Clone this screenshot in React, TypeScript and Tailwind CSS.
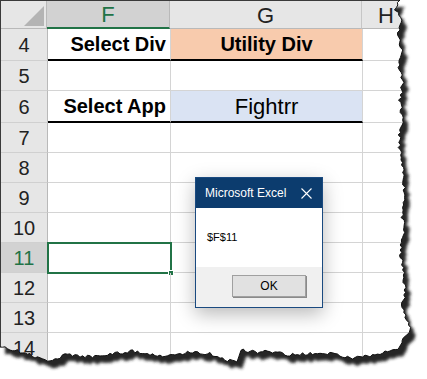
import React from "react";

const GREEN = "#217346";

function rng(seed: number) {
  let s = seed;
  return () => {
    s = (s * 16807) % 2147483647;
    return (s - 1) / 2147483646;
  };
}

// right edge: [y, x]
const rightBase: [number, number][] = [
  [0, 400], [10, 396], [20, 402], [35, 398], [50, 402], [65, 399], [80, 403],
  [100, 400], [120, 402], [140, 399], [160, 401], [180, 404], [200, 405],
  [215, 402], [230, 404], [250, 400], [270, 403], [290, 405], [305, 403],
  [320, 406], [330, 411], [338, 404], [345, 401],
];
// bottom edge: [x, y], right to left
const bottomBase: [number, number][] = [
  [398, 349], [390, 351], [370, 356], [350, 358], [330, 353], [310, 354],
  [290, 355], [270, 351], [255, 352], [241, 350], [237, 361], [225, 360],
  [210, 354], [190, 352], [170, 356], [150, 354], [130, 351], [110, 355],
  [90, 357], [65, 354], [55, 360], [45, 361], [30, 355], [15, 350], [0, 347],
];

function buildEdge(): [number, number][] {
  const r = rng(11);
  const pts: [number, number][] = [];
  for (let i = 0; i < rightBase.length - 1; i++) {
    const [y0, x0] = rightBase[i];
    const [y1, x1] = rightBase[i + 1];
    const steps = Math.max(1, Math.round((y1 - y0) / 2.5));
    for (let k = 0; k < steps; k++) {
      const t = k / steps;
      const y = y0 + (y1 - y0) * t;
      const x = x0 + (x1 - x0) * t + (i === 0 && k === 0 ? 0 : (r() - 0.5) * 3.2);
      pts.push([x, y]);
    }
  }
  for (let i = 0; i < bottomBase.length - 1; i++) {
    const [x0, y0] = bottomBase[i];
    const [x1, y1] = bottomBase[i + 1];
    const steps = Math.max(1, Math.round((x0 - x1) / 2.5));
    for (let k = 0; k < steps; k++) {
      const t = k / steps;
      const x = x0 + (x1 - x0) * t;
      const y = y0 + (y1 - y0) * t + (r() - 0.5) * 3.2;
      pts.push([x, y]);
    }
  }
  pts.push([0, 347]);
  return pts;
}

const edge = buildEdge();
const edgeLine = edge.map((p, i) => `${i ? "L" : "M"}${p[0].toFixed(1)} ${p[1].toFixed(1)}`).join(" ");
const sheetPath = `M0 0 ${edgeLine.replace(/^M/, "L")} Z`;
const outsidePath = `M-20 -20 H447 V399 H-20 Z ${sheetPath}`;

function TornEdge() {
  return (
    <svg
      className="absolute inset-0 pointer-events-none"
      width={427}
      height={379}
      viewBox="0 0 427 379"
    >
      <defs>
        <filter id="blur" x="-10%" y="-10%" width="120%" height="120%">
          <feGaussianBlur stdDeviation="1.8" />
        </filter>
        <clipPath id="outside">
          <path d={outsidePath} clipRule="evenodd" />
        </clipPath>
      </defs>
      <path d={outsidePath} fill="#ffffff" fillRule="evenodd" />
      <g clipPath="url(#outside)">
        <path d={sheetPath} transform="translate(5,7)" fill="#262626" filter="url(#blur)" />
      </g>
      <path d={edgeLine} fill="none" stroke="#111" strokeWidth={1} />
    </svg>
  );
}

type Row = {
  n: number;
  tall?: boolean;
  f?: string;
  g?: string;
  gKind?: "orange" | "blue";
  selected?: boolean;
};

const rows: Row[] = [
  { n: 4, tall: true, f: "Select Div", g: "Utility Div", gKind: "orange" },
  { n: 5 },
  { n: 6, tall: true, f: "Select App", g: "Fightrr", gKind: "blue" },
  { n: 7 },
  { n: 8 },
  { n: 9 },
  { n: 10 },
  { n: 11, selected: true },
  { n: 12 },
  { n: 13 },
  { n: 14 },
];

function SheetRow({ row }: { row: Row }) {
  const black = !!row.tall;
  return (
    <div className={`flex shrink-0 ${row.tall ? "h-[32px]" : "h-[30px]"}`}>
      <div
        className={`w-[47px] shrink-0 flex items-center justify-center border-r border-b border-r-[#b9b9b9] border-b-[#d0d0d0] text-[20px] ${
          row.selected ? "bg-[#d2d2d2] text-[#217346]" : "bg-[#e6e6e6] text-[#222]"
        }`}
      >
        {row.n}
      </div>
      <div
        className={`relative w-[123px] shrink-0 flex items-center justify-end pr-[4px] border-r border-r-[#d4d4d4] font-bold text-[20px] text-black ${
          black ? "border-b-2 border-b-black" : "border-b border-b-[#d4d4d4]"
        }`}
      >
        {row.f}
        {row.selected && (
          <div className="absolute -left-[1px] -top-[1px] w-[125px] h-[32px] border-2 border-[#217346]">
            <div className="absolute -right-[4px] -bottom-[4px] w-[6px] h-[6px] bg-[#217346] border border-white" />
          </div>
        )}
      </div>
      <div
        className={`w-[192px] shrink-0 flex items-center justify-center border-r border-r-[#d4d4d4] text-black ${
          black ? "border-b-2 border-b-black" : "border-b border-b-[#d4d4d4]"
        } ${row.gKind === "orange" ? "bg-[#f8cbad] font-bold text-[20px]" : ""} ${
          row.gKind === "blue" ? "bg-[#dae3f3] text-[22px]" : ""
        }`}
      >
        {row.g}
      </div>
      <div className="flex-1 border-b border-b-[#d4d4d4]" />
    </div>
  );
}

export default function App() {
  return (
    <div className="relative w-[427px] h-[379px] overflow-hidden bg-white font-['Liberation_Sans',Arial,sans-serif]">
      <div className="w-[427px] h-[379px] border-t border-l border-[#3a3a3a] flex flex-col">
        <div className="flex h-[28px] shrink-0">
          <div className="relative w-[46px] shrink-0 bg-[#e6e6e6] border-r border-b border-[#b9b9b9]">
            <svg className="absolute left-0 top-0" width="46" height="27" viewBox="0 0 46 27">
              <path d="M23 25 L43 25 L43 5 Z" fill="#b4b4b4" />
            </svg>
          </div>
          <div
            className="w-[123px] shrink-0 flex items-center justify-center bg-[#d2d2d2] border-r border-r-[#b9b9b9] border-b-2 text-[22px] pt-[1px]"
            style={{ borderBottomColor: GREEN, color: GREEN }}
          >
            F
          </div>
          <div className="w-[192px] shrink-0 flex items-center justify-center bg-[#e6e6e6] border-r border-b border-[#c6c6c6] border-b-[#b9b9b9] text-[22px] text-[#222] pt-[1px]">
            G
          </div>
          <div className="w-[48px] shrink-0 flex items-center justify-center bg-[#e6e6e6] border-b border-[#b9b9b9] text-[22px] text-[#222] pt-[1px]">
            H
          </div>
          <div className="flex-1 bg-[#e6e6e6] border-b border-[#b9b9b9]" />
        </div>
        {rows.map((r) => (
          <SheetRow key={r.n} row={r} />
        ))}
      </div>

      <div className="absolute left-[195px] top-[177px] w-[128px] h-[131px] flex flex-col border border-[#1a4a80] bg-white shadow-[0_6px_18px_rgba(0,0,0,0.28)]">
        <div className="h-[30px] shrink-0 bg-[#0c3c6e] flex items-center justify-between pl-[9px] pr-[10px] text-white text-[12px]">
          <span>Microsoft Excel</span>
          <svg width="11" height="11" viewBox="0 0 11 11">
            <path d="M0.5 0.5 L10.5 10.5 M10.5 0.5 L0.5 10.5" stroke="white" strokeWidth="1.1" />
          </svg>
        </div>
        <div className="h-[59px] shrink-0 flex items-center pl-[11px] text-[11px] text-black">$F$11</div>
        <div className="flex-1 bg-[#f0f0f0] flex items-start justify-end pt-[8px] pr-[16px]">
          <div className="w-[74px] h-[22px] flex items-center justify-center bg-[#e1e1e1] border border-[#a0a0a0] shadow-[1px_1px_0_#8a8a8a] text-[12px] text-black">
            OK
          </div>
        </div>
      </div>

      <TornEdge />
    </div>
  );
}
